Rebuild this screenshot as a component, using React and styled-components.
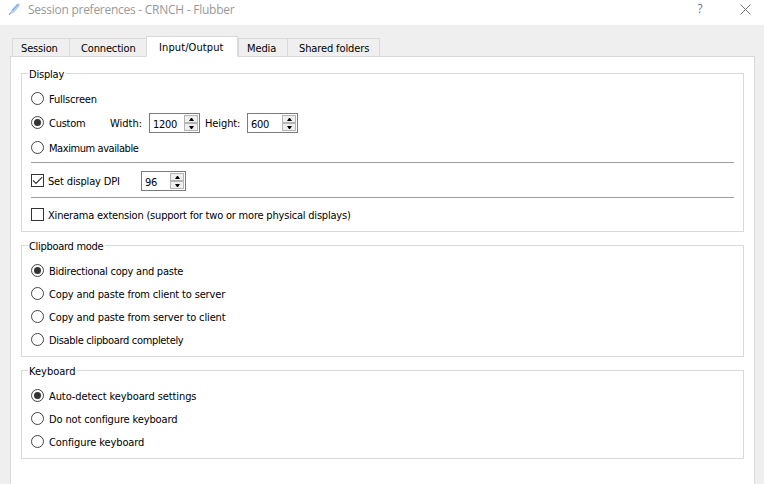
import React from "react";
import styled, { createGlobalStyle } from "styled-components";

const GlobalStyle = createGlobalStyle`
  * { box-sizing: border-box; }
  body {
    margin: 0;
    overflow: hidden;
    background: #efefef;
    color: #000;
    font: 11px/14px "DejaVu Sans Condensed", "DejaVu Sans", sans-serif;
  }
`;

const Dialog = styled.div`
  display: flex;
  flex-direction: column;
  width: 764px;
  height: 484px;
  overflow: hidden;
`;

const TitleBar = styled.header`
  display: flex;
  align-items: center;
  height: 25px;
  padding: 0 13px 7px 8px;
  background: #fff;
  flex: none;
`;

const TitleText = styled.h1`
  flex: 1;
  margin: 0 0 0 7px;
  padding-top: 2px;
  font: 400 12px/16px "Open Sans", "Noto Sans", sans-serif;
  letter-spacing: -0.26px;
  color: #999;
`;

const TitleButton = styled.button`
  display: flex;
  align-items: center;
  justify-content: center;
  width: 12px;
  height: 16px;
  margin: 0 0 0 ${(p) => p.$gap || 0}px;
  padding: 0;
  border: 0;
  background: none;
  font: 400 12px/16px "Open Sans", "Noto Sans", sans-serif;
  color: #777;
`;

const TabBar = styled.nav`
  display: flex;
  align-items: flex-end;
  height: 32px;
  margin: 0 0 -1px 12px;
  flex: none;
  position: relative;
  z-index: 1;
`;

const Tab = styled.div`
  width: ${(p) => p.$width}px;
  height: ${(p) => (p.$active ? 21 : 19)}px;
  padding: ${(p) => (p.$active ? 3 : 2)}px 0 0 ${(p) => p.$indent}px;
  border: 1px solid #d9d9d9;
  border-right-width: ${(p) => (p.$closed ? 1 : 0)}px;
  border-bottom-color: ${(p) => (p.$active ? "#fff" : "#d9d9d9")};
  background: ${(p) => (p.$active ? "#fff" : "#efefef")};
  white-space: nowrap;
`;

const Panel = styled.main`
  display: flex;
  flex-direction: column;
  gap: 13px;
  flex: 1;
  margin: 0 9px 0 10px;
  padding: 16px 10px 0;
  border: 1px solid #d9d9d9;
  border-bottom: 0;
  background: #fff;
`;

const Group = styled.section`
  position: relative;
  display: flex;
  flex-direction: column;
  flex: none;
  height: ${(p) => p.$height}px;
  padding: ${(p) => p.$top}px 9px 0;
  border: 1px solid #d9d9d9;
`;

const Legend = styled.div`
  position: absolute;
  left: 6px;
  top: -7px;
  padding: 0 2px 0 1px;
  background: #fff;
  white-space: nowrap;
`;

const Row = styled.div`
  display: flex;
  align-items: center;
  flex: none;
  height: ${(p) => p.$height || 23}px;
  padding-top: ${(p) => p.$top || 0}px;
`;

const Text = styled.span`
  display: block;
  padding-top: 1px;
  letter-spacing: ${(p) => p.$track || 0}px;
  white-space: nowrap;
`;

const ChoiceText = styled(Text)`
  padding-top: 2px;
`;

const Choice = styled.label`
  display: flex;
  align-items: center;
  gap: ${(p) => p.$gap}px;
  width: ${(p) => (p.$width ? `${p.$width}px` : "auto")};
  height: 13px;
`;

const Mark = styled.svg`
  display: block;
  flex: none;
`;

const Divider = styled.hr`
  flex: none;
  height: 1px;
  margin: ${(p) => p.$gap || 0}px 0 0;
  border: 0;
  background: #a0a0a0;
`;

const FieldLabel = styled.div`
  width: ${(p) => p.$width}px;
  height: 13px;
  line-height: 13px;
`;

const SpinFrame = styled.div`
  display: flex;
  justify-content: space-between;
  width: ${(p) => p.$width}px;
  height: 20px;
  margin: 1px ${(p) => p.$after || 0}px 0 0;
  padding: 1px 1px 1px 3px;
  border: 1px solid #7a7a7a;
  background: #fff;
  line-height: 18px;
`;

const SpinButtons = styled.div`
  display: flex;
  flex-direction: column;
  width: 14px;
`;

const SpinButton = styled.div`
  display: flex;
  align-items: center;
  justify-content: center;
  height: 8px;
  border: 1px solid #b4b4b4;
  background: #efefef;
`;

function Radio({ checked, track, width, children }) {
  return (
    <Choice $gap={5} $width={width}>
      <Mark width="13" height="13" viewBox="0 0 13 13">
        <circle cx="6.5" cy="6.5" r="6" fill="#fff" stroke="#444" />
        {checked && <circle cx="6.5" cy="6.5" r="3.5" fill="#333" />}
      </Mark>
      <ChoiceText $track={track}>{children}</ChoiceText>
    </Choice>
  );
}

function Check({ checked, track, width, children }) {
  return (
    <Choice $gap={4} $width={width}>
      <Mark width="13" height="13" viewBox="0 0 13 13">
        <rect x="0.5" y="0.5" width="12" height="12" fill="#fff" stroke="#333" />
        {checked && <path d="M2 6.3 5 9.3 11.2 3.1" fill="none" stroke="#333" strokeWidth="1.2" />}
      </Mark>
      <ChoiceText $track={track}>{children}</ChoiceText>
    </Choice>
  );
}

function Spin({ value, width, after }) {
  return (
    <SpinFrame $width={width} $after={after}>
      <Text $track={-0.3}>{value}</Text>
      <SpinButtons>
        <SpinButton>
          <Mark width="5" height="3" viewBox="0 0 5 3"><path d="M0 3 2 0h1l2 3z" fill="#000" /></Mark>
        </SpinButton>
        <SpinButton>
          <Mark width="5" height="3" viewBox="0 0 5 3"><path d="M0 0 2 3h1l2-3z" fill="#000" /></Mark>
        </SpinButton>
      </SpinButtons>
    </SpinFrame>
  );
}

const tabs = [
  { label: "Session", width: 57, indent: 8, track: -0.15 },
  { label: "Connection", width: 77, indent: 11, track: -0.15 },
  { label: "Input/Output", width: 92, indent: 12, track: 0.1, active: true, closed: true },
  { label: "Media", width: 49, indent: 8, track: -0.1 },
  { label: "Shared folders", width: 93, indent: 11, track: -0.12, closed: true },
];

export default function App() {
  return (
    <Dialog>
      <GlobalStyle />
      <TitleBar>
        <Mark width="13" height="14" viewBox="0 0 13 14">
          <path d="M3.6 8.4 9.2 2 11.7 1.5 11.4 4 5.6 10.2z" fill="#a9c9f3" />
          <path d="M4 8.5 10 2.2" stroke="#7fabea" strokeWidth="1.1" />
          <path d="M5.5 9.8 11.3 3.6" stroke="#b5d0f6" strokeWidth="1.4" />
          <path d="M3.4 8.2 5.8 10.4 1.2 12.8z" fill="#b9c9e2" />
          <path d="M1 13 2.6 10.8" stroke="#6d8dc0" strokeWidth="0.9" />
        </Mark>
        <TitleText>Session preferences - CRNCH - Flubber</TitleText>
        <TitleButton>?</TitleButton>
        <TitleButton $gap={33}>
          <Mark width="11" height="11" viewBox="0 0 11 11">
            <path d="M.5.5l10 10M10.5.5l-10 10" stroke="#777" strokeWidth="1" />
          </Mark>
        </TitleButton>
      </TitleBar>

      <TabBar>
        {tabs.map((t) => (
          <Tab key={t.label} $width={t.width} $indent={t.indent} $active={t.active} $closed={t.closed}>
            <Text $track={t.track}>{t.label}</Text>
          </Tab>
        ))}
      </TabBar>

      <Panel>
        <Group $height={159} $top={12}>
          <Legend><Text $track={-0.2}>Display</Text></Legend>
          <Row $height={25}><Radio track={-0.2}>Fullscreen</Radio></Row>
          <Row>
            <Radio checked track={-0.25} width={79}>Custom</Radio>
            <FieldLabel $width={39}><Text>Width:</Text></FieldLabel>
            <Spin value="1200" width={51} after={5} />
            <FieldLabel $width={42}><Text $track={-0.1}>Height:</Text></FieldLabel>
            <Spin value="600" width={51} />
          </Row>
          <Row $height={27}><Radio track={-0.42}>Maximum available</Radio></Row>
          <Divider $gap={1} />
          <Row $height={34} $top={1}>
            <Check checked track={-0.16} width={110}>Set display DPI</Check>
            <Spin value="96" width={45} />
          </Row>
          <Divider />
          <Row $height={33}>
            <Check track={-0.2}>Xinerama extension (support for two or more physical displays)</Check>
          </Row>
        </Group>

        <Group $height={112} $top={13}>
          <Legend><Text $track={-0.3}>Clipboard mode</Text></Legend>
          <Row><Radio checked track={-0.24}>Bidirectional copy and paste</Radio></Row>
          <Row><Radio track={-0.15}>Copy and paste from client to server</Radio></Row>
          <Row><Radio track={-0.14}>Copy and paste from server to client</Radio></Row>
          <Row><Radio track={-0.33}>Disable clipboard completely</Radio></Row>
        </Group>

        <Group $height={89} $top={13}>
          <Legend><Text>Keyboard</Text></Legend>
          <Row><Radio checked track={-0.09}>Auto-detect keyboard settings</Radio></Row>
          <Row><Radio track={-0.13}>Do not configure keyboard</Radio></Row>
          <Row><Radio track={-0.09}>Configure keyboard</Radio></Row>
        </Group>
      </Panel>
    </Dialog>
  );
}
